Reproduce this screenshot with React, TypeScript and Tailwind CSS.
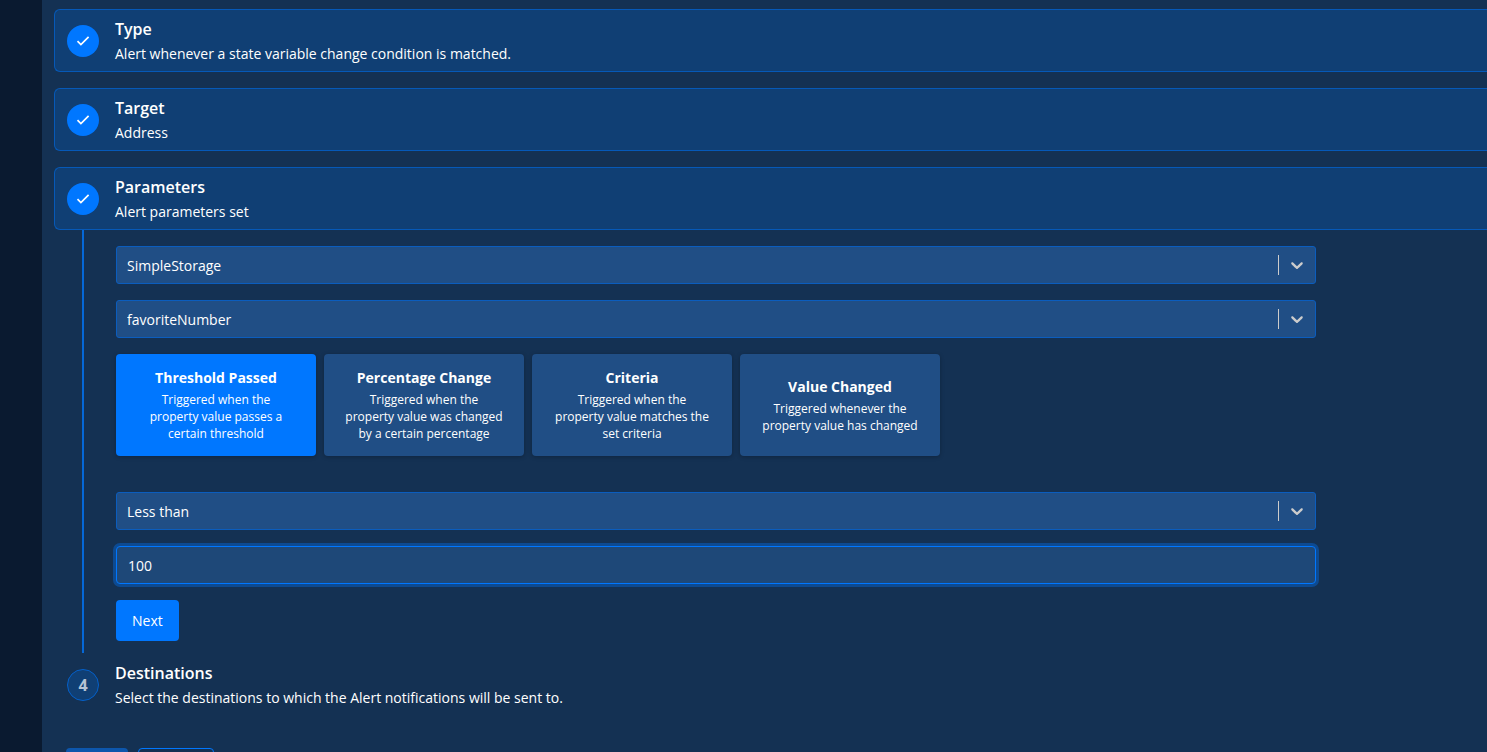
import { useState, type ReactNode } from 'react';

function CheckIcon() {
  return (
    <svg viewBox="0 0 16 16" className="size-4" fill="none" stroke="currentColor" strokeWidth="1.7" aria-hidden="true">
      <path d="M2.5 8.2 5.9 11.5 13.6 3.9" strokeLinejoin="miter" />
    </svg>
  );
}

function Step({
  title,
  description,
  done = false,
  index,
}: {
  title: string;
  description: string;
  done?: boolean;
  index: number;
}) {
  return (
    <header
      className={
        done
          ? 'flex items-center gap-4 rounded-l-md border border-r-0 border-[#0659b8] bg-[#103f74] px-3 py-[7px]'
          : 'flex items-center gap-4 border border-transparent px-3 py-[7px]'
      }
    >
      {done ? (
        <span className="flex size-8 shrink-0 items-center justify-center rounded-full bg-[#0077ff]">
          <CheckIcon />
        </span>
      ) : (
        <span className="flex size-8 shrink-0 items-center justify-center rounded-full border border-[#0460ca] bg-[#103f74] text-base font-bold text-[#b5c3d4]">
          {index}
        </span>
      )}
      <div className="flex flex-col gap-[3px]">
        <h2 className="text-base leading-6 font-semibold">{title}</h2>
        <p className="text-sm leading-5">{description}</p>
      </div>
    </header>
  );
}

function SelectField({ label, options }: { label: string; options: string[] }) {
  return (
    <div className="relative">
      <select
        aria-label={label}
        className="block h-[38px] w-full appearance-none rounded-[3px] border border-[#0b5dbe] bg-[#204e85] pt-0.5 pr-12 pl-2.5 text-sm outline-none"
      >
        {options.map((option) => (
          <option key={option}>{option}</option>
        ))}
      </select>
      <div className="pointer-events-none absolute inset-y-0 right-0 flex items-center gap-2 pr-[9px]" aria-hidden="true">
        <span className="h-5 w-px bg-[#cccccc]" />
        <svg viewBox="0 0 20 20" className="size-5 fill-[#cccccc]">
          <path d="M4.516 7.548c0.436-0.446 1.043-0.481 1.576 0l3.908 3.747 3.908-3.747c0.533-0.481 1.141-0.446 1.574 0 0.436 0.445 0.408 1.197 0 1.615-0.406 0.418-4.695 4.502-4.695 4.502-0.217 0.223-0.502 0.335-0.787 0.335s-0.57-0.112-0.789-0.335c0 0-4.287-4.084-4.695-4.502s-0.436-1.17 0-1.615z" />
        </svg>
      </div>
    </div>
  );
}

const conditions = [
  { title: 'Threshold Passed', text: 'Triggered when the property value passes a certain threshold' },
  { title: 'Percentage Change', text: 'Triggered when the property value was changed by a certain percentage' },
  { title: 'Criteria', text: 'Triggered when the property value matches the set criteria' },
  { title: 'Value Changed', text: 'Triggered whenever the property value has changed' },
];

function StepBody({ children }: { children: ReactNode }) {
  return (
    <div className="ml-7 border-l-2 border-[#0568d8] pt-4 pr-4 pb-3 pl-8">
      <div className="flex max-w-[1200px] flex-col gap-4">{children}</div>
    </div>
  );
}

export default function App() {
  const [active, setActive] = useState(0);
  const [threshold, setThreshold] = useState('100');

  return (
    <div className="flex h-screen overflow-hidden bg-[#143153] font-['Open_Sans','Noto_Sans',sans-serif] text-sm text-white">
      <aside className="w-[42px] shrink-0 bg-[#0a1a30]" />
      <main className="min-w-0 grow overflow-hidden pt-[9px] pl-3">
        <div className="flex flex-col gap-4">
          <Step index={1} done title="Type" description="Alert whenever a state variable change condition is matched." />
          <Step index={2} done title="Target" description="Address" />
          <Step index={3} done title="Parameters" description="Alert parameters set" />
        </div>
        <StepBody>
          <SelectField label="Contract" options={['SimpleStorage']} />
          <SelectField label="State variable" options={['favoriteNumber']} />
          <div className="mb-5 flex flex-wrap gap-2">
            {conditions.map(({ title, text }, i) => (
              <button
                key={title}
                type="button"
                aria-pressed={i === active}
                onClick={() => setActive(i)}
                className={
                  i === active
                    ? 'flex h-[102px] w-[200px] flex-col items-center justify-center gap-[3px] rounded bg-[#0077ff] px-5 shadow-[0_1px_4px_rgba(0,0,0,0.25)]'
                    : 'flex h-[102px] w-[200px] flex-col items-center justify-center gap-[3px] rounded bg-[#204e85] px-5 shadow-[0_1px_4px_rgba(0,0,0,0.25)]'
                }
              >
                <span className="text-sm leading-5 font-bold">{title}</span>
                <span className="text-xs leading-[17px]">{text}</span>
              </button>
            ))}
          </div>
          <SelectField label="Comparison" options={['Less than', 'Greater than']} />
          <input
            type="text"
            aria-label="Threshold"
            value={threshold}
            onChange={(e) => setThreshold(e.target.value)}
            className="h-[38px] w-full rounded border border-[#0077ff] bg-[#1e4878] px-[11px] text-sm ring-3 ring-[#0d4a91] outline-none"
          />
          <button type="button" className="self-start rounded bg-[#0077ff] px-4 py-2.5 text-sm leading-[21px]">
            Next
          </button>
        </StepBody>
        <Step index={4} title="Destinations" description="Select the destinations to which the Alert notifications will be sent to." />
        <div className="mt-8 ml-3 flex gap-2.5">
          <button type="button" disabled className="h-10 w-[62px] rounded bg-[#0d56ac]" aria-label="Save" />
          <button type="button" className="h-10 w-[76px] rounded border border-[#0077ff]" aria-label="Cancel" />
        </div>
      </main>
    </div>
  );
}
